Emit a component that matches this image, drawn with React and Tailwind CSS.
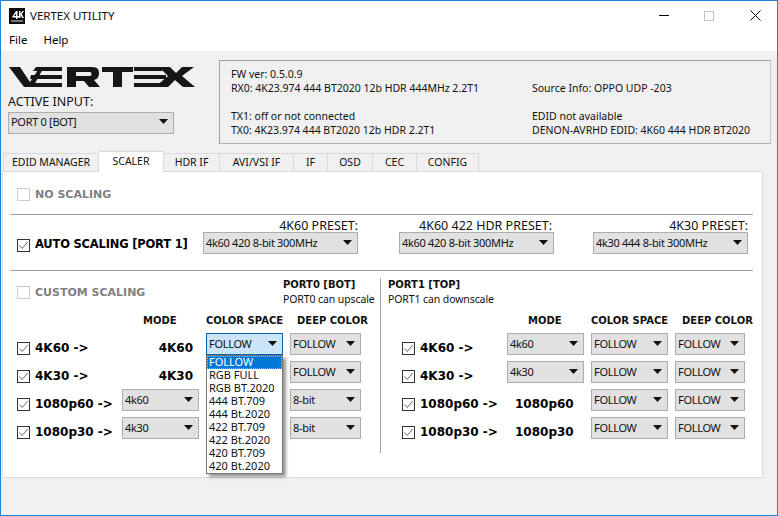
import React from 'react';

const tabs = [
  { name: 'EDID MANAGER', w: 'w-[96px]' },
  { name: 'SCALER', w: 'w-[65px]', active: true },
  { name: 'HDR IF', w: 'w-[56px]' },
  { name: 'AVI/VSI IF', w: 'w-[74px]' },
  { name: 'IF', w: 'w-[34px]' },
  { name: 'OSD', w: 'w-[45px]' },
  { name: 'CEC', w: 'w-[44px]' },
  { name: 'CONFIG', w: 'w-[62px]' },
];

const colorOptions = ['FOLLOW', 'RGB FULL', 'RGB BT.2020', '444 BT.709', '444 Bt.2020', '422 BT.709', '422 Bt.2020', '420 BT.709', '420 Bt.2020'];

const boldFont = "font-['DejaVu_Sans'] font-bold";

const Caret = () => (
  <svg width="9" height="5" viewBox="0 0 9 5" className="shrink-0">
    <path d="M0 0h9L4.500 5z" fill="#111" />
  </svg>
);

const Select = ({ value, className = '', open = false }) => (
  <div
    className={`flex h-[22px] items-center justify-between border pb-[2px] pl-[2px] pr-[5px] text-[11px] leading-none tracking-[-0.3px] text-[#111] ${
      open ? 'border-[#0a64ad] bg-[#cce4f7]' : 'border-[#adadad] bg-[#e1e1e1]'
    } ${className}`}
  >
    <span>{value}</span>
    <Caret />
  </div>
);

const Check = ({ checked = true }) => (
  <div className={`flex h-[13px] w-[13px] shrink-0 items-center justify-center border bg-white ${checked ? 'border-[#333]' : 'border-[#ccc]'}`}>
    {checked && (
      <svg width="11" height="11" viewBox="0 0 11 11">
        <path d="M1.500 5.500 4.200 8.500 9.700 2" fill="none" stroke="#666" strokeWidth="1" />
      </svg>
    )}
  </div>
);

const ScaleLabel = ({ text }) => (
  <div className="flex items-center gap-[5px] pt-[8px]">
    <Check />
    <span className={`${boldFont} whitespace-nowrap text-[12px] leading-none text-black`}>{text}</span>
  </div>
);

const ModeText = ({ text, className = '' }) => (
  <div className={`${boldFont} flex items-center whitespace-nowrap pt-[8px] text-[12px] leading-none text-black ${className}`}>{text}</div>
);

const ColHeader = ({ columns }) => (
  <div className={`${boldFont} mb-[6px] grid h-[13px] gap-x-[7px] whitespace-nowrap text-[10px] leading-[13px] text-[#111] ${columns}`}>
    <div />
    <div className="pl-[21px]">MODE</div>
    <div>COLOR SPACE</div>
    <div className="pl-[7px]">DEEP COLOR</div>
  </div>
);

const ColorDropdown = () => (
  <div className="absolute left-0 top-[22px] z-10 w-[77px] border border-[#767676] bg-white shadow-[3px_3px_3px_rgba(0,0,0,0.4)]">
    {colorOptions.map((opt, i) => (
      <div
        key={opt}
        className={`h-[13px] pl-[2px] text-[11px] leading-[12px] ${
          i === 0 ? 'bg-[#0078d7] text-white outline-1 -outline-offset-1 outline-dotted outline-[#f5a623]' : 'text-[#111]'
        }`}
      >
        {opt}
      </div>
    ))}
  </div>
);

const App = () => {
  return (
    <div className="flex h-[516px] w-[778px] flex-col overflow-hidden border border-[#1883d7] bg-[#f0f0f0] font-['Noto_Sans',sans-serif] text-[#111]">
      {/* Title bar */}
      <div className="flex h-[29px] shrink-0 items-center bg-white pl-[8px]">
        <svg width="16" height="16" viewBox="0 0 16 16" className="shrink-0">
          <rect width="16" height="16" fill="#0b0b0b" />
          <path d="M3 9 7 3h1.500v5H10v1.400H8.500V11H7V9.400H3zM5 8h2V5.500zM10 3h1.500v3L13.500 3H15l-2.200 3.200L15 10h-1.700l-1.800-3v3H10z" fill="#fff" />
          <rect x="2" y="12" width="12" height="2" fill="#777" />
        </svg>
        <span className="ml-[5px] text-[11.500px] leading-none text-[#111]">VERTEX UTILITY</span>
        <div className="ml-auto flex items-center pr-[16px]">
          <svg width="10" height="1" viewBox="0 0 10 1">
            <rect width="10" height="1" fill="#000" />
          </svg>
          <div className="ml-[35px] h-[10px] w-[10px] border border-[#c4c4c4]" />
          <svg width="11" height="11" viewBox="0 0 11 11" className="ml-[36px]">
            <path d="M.500.500l10 10M10.500.500l-10 10" stroke="#000" strokeWidth="1" fill="none" />
          </svg>
        </div>
      </div>

      {/* Menu */}
      <div className="flex h-[21px] shrink-0 items-center gap-[16px] bg-white pb-[1px] pl-[8px] text-[11.500px] leading-none text-black">
        <span>File</span>
        <span>Help</span>
      </div>

      {/* Top panel */}
      <div className="flex h-[100px] shrink-0 pl-[7px] pr-[6px] pt-[9px]">
        <div className="w-[211px] shrink-0">
          <svg width="187" height="20" viewBox="0 0 187 20" className="ml-[1px] mt-[7px] block">
            <g fill="#161616">
              <path d="M0 0h11l10 15L31 0h4L24 20H15z" />
              <path d="M27 0h26v4H24zM22 8h31v4H21zM20 16h33v4H20z" />
              <path d="M58 0h25c6 0 7 3 7 6s-1 6-5 7l6 7H80l-5-6H67v6h-9zM67 5v4h14c2 0 2-4 0-4z" />
              <path d="M93 0h31v5h-11v15h-9V5H93z" />
              <path d="M125 0h28v4h-28zM125 8h32v4h-32zM125 16h28v4h-28z" />
              <path d="M150 0h11l6 6 6-6h12l-12 9 13 11h-12l-8-7-7 7h-13l13-11z" />
            </g>
          </svg>
          <div className="mt-[9px] text-[12.500px] leading-none text-[#111]">ACTIVE INPUT:</div>
          <Select value="PORT 0 [BOT]" className="mt-[3px] h-[21px] w-[166px]" />
        </div>
        <div className="flex h-[84px] w-[552px] gap-[50px] border-[1.500px] border-t-[#a0a0a0] border-l-[#a0a0a0] border-r-[#c8c8c8] border-b-[#b0b0b0] pl-[11px] pt-[6px] text-[10.500px] leading-[14px] text-[#111]">
          <div className="w-[251px] shrink-0 whitespace-nowrap">
            <div>FW ver: 0.5.0.9</div>
            <div>RX0: 4K23.974 444 BT2020 12b HDR 444MHz 2.2T1</div>
            <div className="mt-[14px]">TX1: off or not connected</div>
            <div>TX0: 4K23.974 444 BT2020 12b HDR 2.2T1</div>
          </div>
          <div className="whitespace-nowrap pt-[14px]">
            <div>Source Info: OPPO UDP -203</div>
            <div className="mt-[14px]">EDID not available</div>
            <div>DENON-AVRHD EDID: 4K60 444 HDR BT2020</div>
          </div>
        </div>
      </div>

      {/* Tabs */}
      <div className="flex h-[20px] shrink-0 items-end pl-[2px]">
        {tabs.map((tab) => (
          <div
            key={tab.name}
            className={`flex items-center justify-center whitespace-nowrap border-r border-t border-[#d9d9d9] first:border-l text-[10.500px] leading-none text-[#111] ${tab.w} ${
              tab.active ? 'relative z-10 -mb-px h-[21px] bg-white pb-[2px]' : 'h-[18px] bg-[#f0f0f0]'
            }`}
          >
            {tab.name}
          </div>
        ))}
      </div>

      {/* Tab panel */}
      <div className="ml-[1px] mr-[14px] h-[307px] shrink-0 border border-[#d9d9d9] bg-white pl-[7px]">
        <div className="flex h-[42px] items-center gap-[5px] pl-[7px] pt-[3px]">
          <Check checked={false} />
          <span className={`${boldFont} text-[11px] leading-none text-[#808080]`}>NO SCALING</span>
        </div>
        <div className="mr-[9px] h-px bg-[#a0a0a0]" />

        <div className="flex h-[55px] pl-[7px]">
          <div className="flex w-[186px] shrink-0 items-center gap-[5px] pt-[5px]">
            <Check />
            <span className={`${boldFont} whitespace-nowrap text-[11.500px] leading-none tracking-[-0.2px] text-black`}>AUTO SCALING [PORT 1]</span>
          </div>
          <div className="flex pt-[4px]">
            <div className="w-[155px]">
              <div className="text-right text-[12.500px] leading-[13px]">4K60 PRESET:</div>
              <Select value="4k60 420 8-bit 300MHz" />
            </div>
            <div className="ml-[41px] w-[155px]">
              <div className="pr-[2px] text-right text-[12.500px] leading-[13px]">4K60 422 HDR PRESET:</div>
              <Select value="4k60 420 8-bit 300MHz" />
            </div>
            <div className="ml-[39px] w-[155px]">
              <div className="text-right text-[12.500px] leading-[13px]">4K30 PRESET:</div>
              <Select value="4k30 444 8-bit 300MHz" />
            </div>
          </div>
        </div>
        <div className="mr-[9px] h-px bg-[#a0a0a0]" />

        <div className="flex pt-[7px]">
          {/* Port 0 */}
          <div className="w-[370px] shrink-0 pl-[7px]">
            <div className="flex h-[28px] items-center">
              <div className="flex w-[266px] shrink-0 items-center gap-[5px] pt-[1px]">
                <Check checked={false} />
                <span className={`${boldFont} text-[11px] leading-none text-[#808080]`}>CUSTOM SCALING</span>
              </div>
              <div className="whitespace-nowrap">
                <div className={`${boldFont} text-[10px] leading-[14px]`}>PORT0 [BOT]</div>
                <div className="text-[10.500px] leading-[14px] tracking-[-0.1px]">PORT0 can upscale</div>
              </div>
            </div>
            <div className="mt-[8px]">
              <ColHeader columns="grid-cols-[98px_77px_77px_71px]" />
              <div className="grid auto-rows-[22px] grid-cols-[98px_77px_77px_71px] gap-x-[7px] gap-y-[6px]">
                <ScaleLabel text="4K60 ->" />
                <ModeText text="4K60" className="justify-end pr-[6px]" />
                <div className="relative">
                  <Select value="FOLLOW" open />
                  <ColorDropdown />
                </div>
                <Select value="FOLLOW" />

                <ScaleLabel text="4K30 ->" />
                <ModeText text="4K30" className="justify-end pr-[6px]" />
                <div />
                <Select value="FOLLOW" />

                <ScaleLabel text="1080p60 ->" />
                <Select value="4k60" />
                <div />
                <Select value="8-bit" />

                <ScaleLabel text="1080p30 ->" />
                <Select value="4k30" />
                <div />
                <Select value="8-bit" />
              </div>
            </div>
          </div>

          {/* Port 1 */}
          <div className="h-[175px] border-l border-[#a0a0a0] pl-[7px]">
            <div className="h-[28px] whitespace-nowrap">
              <div className={`${boldFont} text-[10px] leading-[14px]`}>PORT1 [TOP]</div>
              <div className="text-[10.500px] leading-[14px] tracking-[-0.1px]">PORT1 can downscale</div>
            </div>
            <div className="ml-[14px] mt-[8px]">
              <ColHeader columns="grid-cols-[98px_77px_77px_70px]" />
              <div className="grid auto-rows-[22px] grid-cols-[98px_77px_77px_70px] gap-x-[7px] gap-y-[6px]">
                <ScaleLabel text="4K60 ->" />
                <Select value="4k60" />
                <Select value="FOLLOW" />
                <Select value="FOLLOW" />

                <ScaleLabel text="4K30 ->" />
                <Select value="4k30" />
                <Select value="FOLLOW" />
                <Select value="FOLLOW" />

                <ScaleLabel text="1080p60 ->" />
                <ModeText text="1080p60" className="pl-[8px]" />
                <Select value="FOLLOW" />
                <Select value="FOLLOW" />

                <ScaleLabel text="1080p30 ->" />
                <ModeText text="1080p30" className="pl-[8px]" />
                <Select value="FOLLOW" />
                <Select value="FOLLOW" />
              </div>
            </div>
          </div>
        </div>
      </div>
    </div>
  );
};

export default App;
